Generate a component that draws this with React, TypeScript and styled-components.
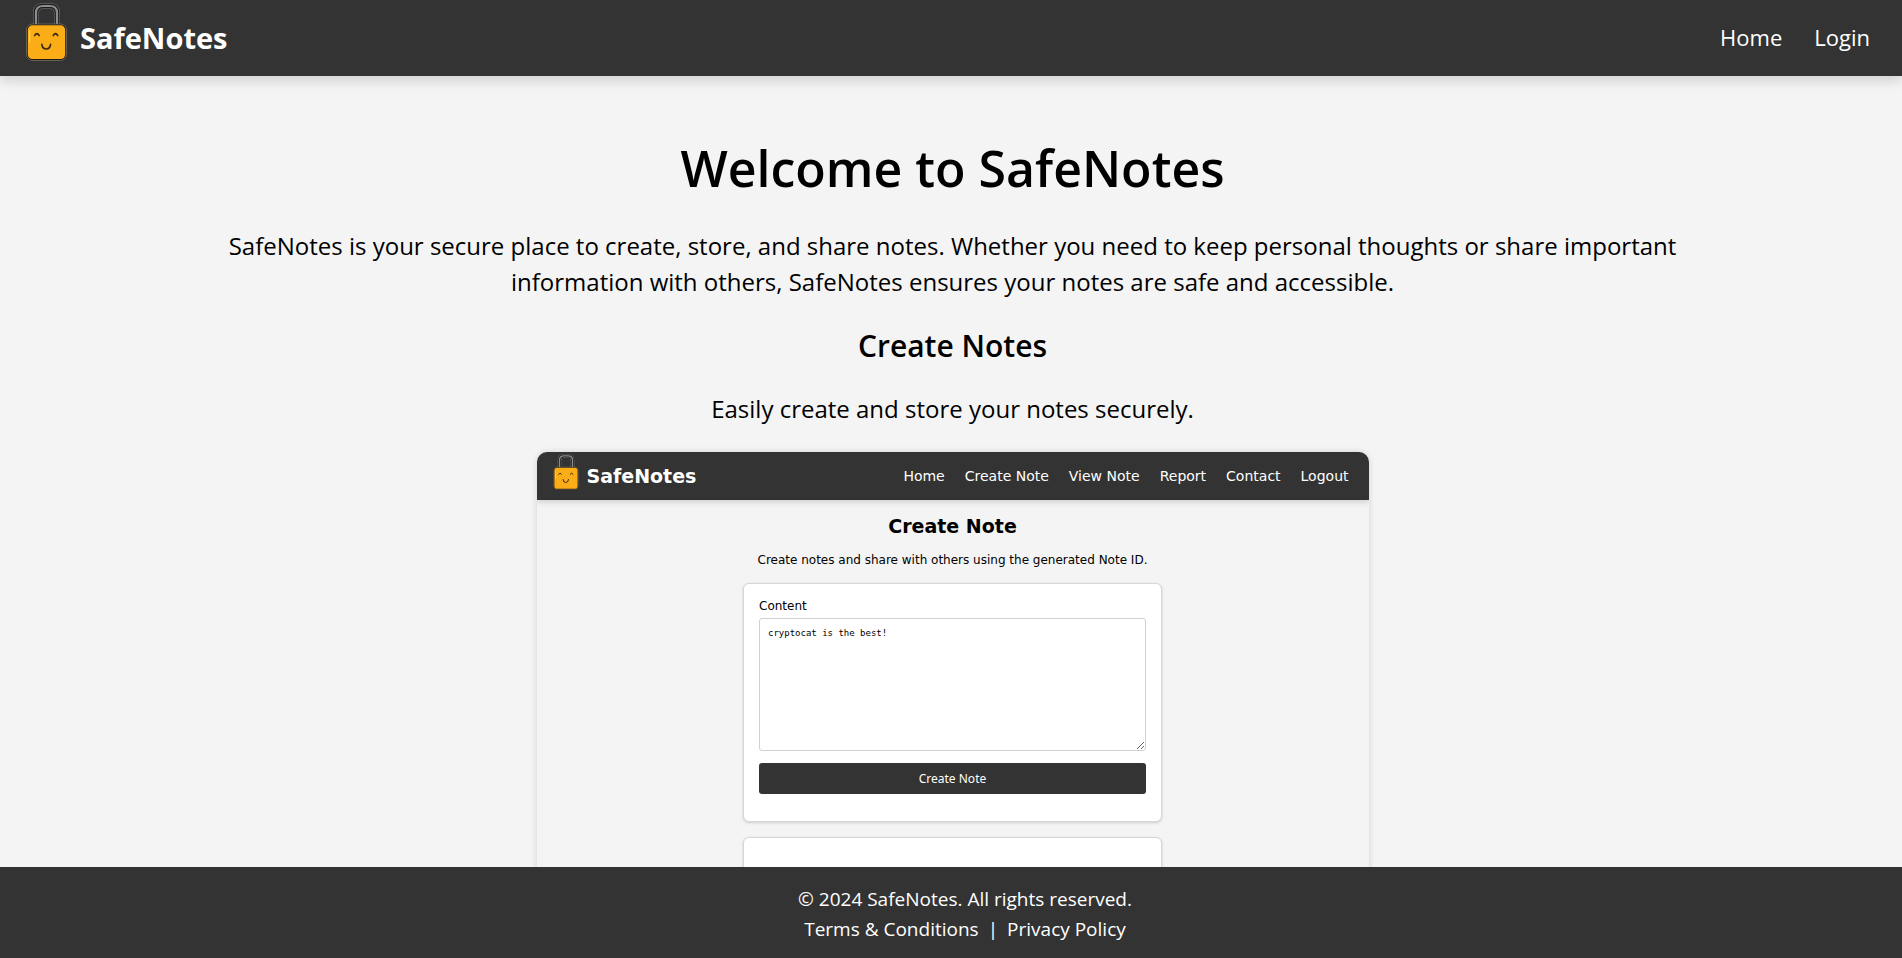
import React from "react";
import styled, { createGlobalStyle } from "styled-components";

const Global = createGlobalStyle`
  *, *::before, *::after { box-sizing: border-box; }
  body { margin: 0; background: #f4f4f4; color: #000; font-family: "Open Sans", sans-serif; }
  h1, h2, h3, p { margin: 0; }
  a { color: inherit; text-decoration: none; }
`;

const Page = styled.div`
  height: 100vh;
  display: flex;
  flex-direction: column;
`;

const Header = styled.header`
  position: relative;
  flex: none;
  display: flex;
  align-items: center;
  justify-content: space-between;
  height: 76px;
  padding: 0 32px 0 26px;
  background: #333;
  color: #fff;
  box-shadow: 0 4px 12px rgba(0, 0, 0, 0.16);
`;

const Brand = styled.a<{ $small?: boolean }>`
  display: flex;
  align-items: center;
  gap: ${(p) => (p.$small ? 8 : 13)}px;
  font-size: ${(p) => (p.$small ? 19 : 29)}px;
  line-height: ${(p) => (p.$small ? 24 : 40)}px;
  font-weight: 700;

  svg {
    width: ${(p) => (p.$small ? 26 : 41)}px;
    height: ${(p) => (p.$small ? 36 : 58)}px;
    margin-bottom: ${(p) => (p.$small ? 8 : 12)}px;
  }
`;

const Nav = styled.nav<{ $small?: boolean }>`
  display: flex;
  gap: ${(p) => (p.$small ? 20 : 32)}px;
  padding-bottom: ${(p) => (p.$small ? 0 : 2)}px;
  font-size: ${(p) => (p.$small ? 14 : 22)}px;
  line-height: ${(p) => (p.$small ? 20 : 30)}px;
`;

const Main = styled.main`
  flex: 1;
  min-height: 0;
  overflow: hidden;
  padding: 60px 30px 0 33px;
  text-align: center;
`;

const Title = styled.h1`
  margin-bottom: 28px;
  font-size: 50px;
  line-height: 64px;
  font-weight: 600;
`;

const Text = styled.p`
  max-width: 1500px;
  margin: 24px auto 0;
  font-size: 24px;
  line-height: 36px;
`;

const Subtitle = styled.h2`
  margin: 26px 0 25px;
  font-size: 30px;
  line-height: 40px;
  font-weight: 600;
`;

const Preview = styled.section`
  width: 832px;
  max-width: 100%;
  height: 600px;
  margin: 25px auto 0;
  border-radius: 10px;
  overflow: hidden;
  background: #f4f4f4;
  box-shadow: 0 0 6px rgba(0, 0, 0, 0.14);
  font-family: "DejaVu Sans", sans-serif;
`;

const PreviewBar = styled.div`
  display: flex;
  align-items: center;
  justify-content: space-between;
  height: 48px;
  padding: 0 20px 0 16px;
  background: #333;
  color: #fff;
  box-shadow: 0 2px 6px rgba(0, 0, 0, 0.16);
`;

const PreviewBody = styled.div`
  display: flex;
  flex-direction: column;
  align-items: center;
`;

const PreviewTitle = styled.h3`
  margin-top: 14px;
  font-size: 19px;
  line-height: 24px;
`;

const PreviewText = styled.p`
  margin: 12px 0 13px;
  font-size: 12px;
  line-height: 20px;
`;

const Card = styled.form`
  width: 419px;
  height: 239px;
  margin-bottom: 15px;
  padding: 14px 15px;
  display: flex;
  flex-direction: column;
  background: #fff;
  border: 1px solid #d6d6d6;
  border-radius: 6px;
  box-shadow: 0 1px 3px rgba(0, 0, 0, 0.16);
  text-align: left;
`;

const Label = styled.label`
  font-size: 12px;
  line-height: 16px;
  margin-bottom: 4px;
`;

const NoteInput = styled.textarea`
  height: 133px;
  padding: 8px;
  border: 1px solid #d0d0d0;
  border-radius: 3px;
  font: 9px/12px "DejaVu Sans Mono", monospace;
  color: #000;
  resize: vertical;
  outline: none;
`;

const Submit = styled.button`
  height: 31px;
  margin-top: 12px;
  border: 0;
  border-radius: 3px;
  background: #333;
  color: #fff;
  font: 12px/16px "Noto Sans", sans-serif;
`;

const Footer = styled.footer`
  position: relative;
  flex: none;
  padding: 17px 0 14px 28px;
  background: #333;
  color: #fff;
  font-size: 19px;
  line-height: 30px;
  text-align: center;
`;

const FooterLinks = styled.div`
  display: flex;
  justify-content: center;
  gap: 9px;
`;

const shackle = "M10 23V10Q10 3 17 3H24Q31 3 31 10V23";

function Lock() {
  return (
    <svg viewBox="0 0 41 58" fill="none" aria-hidden="true">
      <path d={shackle} stroke="#686868" strokeWidth="6" />
      <path d={shackle} stroke="#1c1c1c" strokeWidth="4.6" />
      <path d={shackle} stroke="#8d8d8d" strokeWidth="2.2" />
      <rect x="0.5" y="21" width="40" height="36.5" rx="6" fill="#1f1b16" stroke="#77705f" strokeWidth="0.8" />
      <rect x="1.8" y="22.3" width="37.4" height="33.7" rx="4.6" fill="#fbad18" />
      <path d="M3.6 28V39" stroke="#ffd06b" strokeWidth="1.2" strokeLinecap="round" />
      <g stroke="#3a2a10" strokeWidth="1.6" strokeLinecap="round">
        <path d="M8.6 32.6Q11 28.6 13.2 32.6" />
        <path d="M27.2 32.6Q29.5 28.6 31.8 32.6" />
        <path d="M15.8 41.2Q16.3 46 20.2 46Q24.1 46 24.6 41.2" />
      </g>
    </svg>
  );
}

const previewLinks = ["Home", "Create Note", "View Note", "Report", "Contact", "Logout"];

export default function App() {
  return (
    <Page>
      <Global />
      <Header>
        <Brand href="#"><Lock />SafeNotes</Brand>
        <Nav>
          <a href="#home">Home</a>
          <a href="#login">Login</a>
        </Nav>
      </Header>
      <Main>
        <Title>Welcome to SafeNotes</Title>
        <Text>
          SafeNotes is your secure place to create, store, and share notes. Whether you need to keep
          personal thoughts or share important information with others, SafeNotes ensures your notes
          are safe and accessible.
        </Text>
        <Subtitle>Create Notes</Subtitle>
        <Text>Easily create and store your notes securely.</Text>
        <Preview>
          <PreviewBar>
            <Brand $small href="#"><Lock />SafeNotes</Brand>
            <Nav $small>
              {previewLinks.map((label) => <a key={label} href="#">{label}</a>)}
            </Nav>
          </PreviewBar>
          <PreviewBody>
            <PreviewTitle>Create Note</PreviewTitle>
            <PreviewText>Create notes and share with others using the generated Note ID.</PreviewText>
            <Card>
              <Label htmlFor="content">Content</Label>
              <NoteInput id="content" defaultValue="cryptocat is the best!" />
              <Submit type="button">Create Note</Submit>
            </Card>
            <Card as="div" />
          </PreviewBody>
        </Preview>
      </Main>
      <Footer>
        <p>© 2024 SafeNotes. All rights reserved.</p>
        <FooterLinks>
          <a href="#terms">Terms &amp; Conditions</a>
          <span>|</span>
          <a href="#privacy">Privacy Policy</a>
        </FooterLinks>
      </Footer>
    </Page>
  );
}
